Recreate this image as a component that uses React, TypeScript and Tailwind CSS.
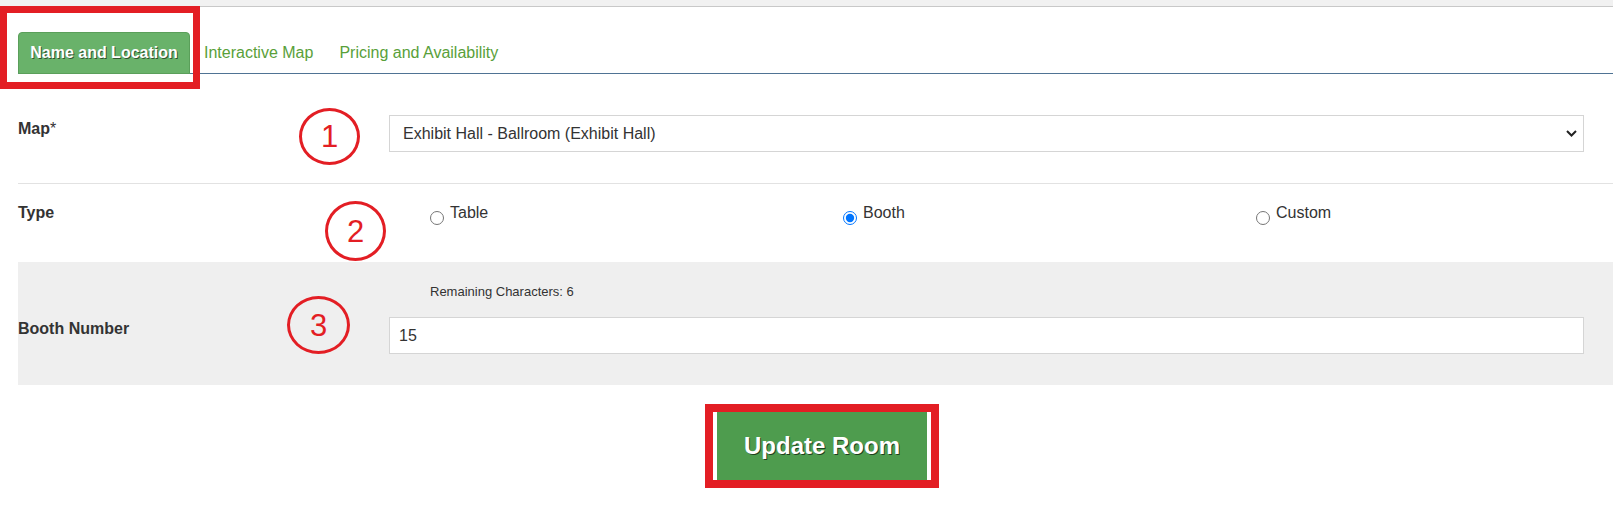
import React from "react";

const tabs = ["Name and Location", "Interactive Map", "Pricing and Availability"];

function Marker({ n, className }: { n: number; className: string }) {
  // red hand-drawn style annotation circle
  return (
    <div
      className={`absolute flex items-center justify-center rounded-[50%] border-[3.5px] border-[#e31e24] text-[#e31e24] text-[31px] leading-none ${className}`}
    >
      {n}
    </div>
  );
}

export default function App() {
  return (
    <div className="relative min-h-[518px] bg-white font-['Liberation_Sans',Arial,sans-serif] text-[#333]">
      <div className="h-[6px] bg-[#f1f1f1] border-b border-[#c8c8c8] box-content" />

      {/* Tabs */}
      <div className="pt-[25px]">
        <div className="ml-[18px] flex items-end border-b border-[#4f7394]">
          {tabs.map((t, i) =>
            i === 0 ? (
              <div
                key={t}
                className="-mb-px h-[42px] w-[172px] flex items-center justify-center rounded-t-[4px] bg-[#69b26a] border border-[#5a9f5a] text-white text-[16px] font-bold [text-shadow:1px_1px_0_rgba(0,0,0,0.55)]"
              >
                {t}
              </div>
            ) : (
              <div key={t} className="ml-[2px] h-[41px] px-[12px] flex items-center text-[16px] text-[#59a03a]">
                {t}
              </div>
            )
          )}
        </div>
      </div>

      {/* Form */}
      <div className="pl-[18px]">
        {/* Map row */}
        <div className="flex h-[110px] border-b border-[#e2e2e2]">
          <div className="w-[371px] shrink-0 pt-[46px] text-[16px] font-bold leading-[18px]">
            Map<span className="font-normal">*</span>
          </div>
          <div className="flex-1 mr-[29px] pt-[41px]">
            <div className="relative">
              <select
                defaultValue="a"
                className="w-full h-[37px] appearance-none border border-[#d5d5d5] bg-white pl-[13px] text-[16px] text-[#333] outline-none"
              >
                <option value="a">Exhibit Hall - Ballroom (Exhibit Hall)</option>
              </select>
              <svg
                className="pointer-events-none absolute right-[7px] top-[15px]"
                width="11"
                height="7"
                viewBox="0 0 11 7"
              >
                <path d="M1 1l4.5 4.5L10 1" fill="none" stroke="#222" strokeWidth="2" />
              </svg>
            </div>
          </div>
        </div>

        {/* Type row */}
        <div className="flex h-[78px]">
          <div className="w-[371px] shrink-0 pt-[20px] text-[16px] font-bold leading-[18px]">Type</div>
          <div className="flex pl-[41px] pt-[20px]">
            {["Table", "Booth", "Custom"].map((o) => (
              <label key={o} className="w-[413px] shrink-0 flex items-start gap-[6px] text-[16px] leading-[18px]">
                <input
                  type="radio"
                  name="type"
                  defaultChecked={o === "Booth"}
                  className="mt-[7px] w-[14px] h-[14px] accent-[#0075ff]"
                />
                {o}
              </label>
            ))}
          </div>
        </div>

        {/* Booth number row */}
        <div className="flex h-[123px] bg-[#efefef]">
          <div className="w-[371px] shrink-0 pt-[58px] text-[16px] font-bold leading-[18px]">Booth Number</div>
          <div className="flex-1 mr-[29px] pt-[22px]">
            <div className="pl-[41px] text-[13px] leading-[16px] mb-[17px]">Remaining Characters: 6</div>
            <input
              defaultValue="15"
              className="w-full h-[37px] border border-[#d5d5d5] bg-white pl-[9px] text-[16px] text-[#333] outline-none"
            />
          </div>
        </div>

        {/* Submit */}
        <div className="mt-[19px] ml-[687px] w-[234px] h-[84px] border-[8px] border-[#e31e24] px-[4px]">
          <button className="w-full h-full bg-[#4e9c4e] text-white text-[24px] font-bold [text-shadow:1px_1px_0_rgba(0,0,0,0.6)]">
            Update Room
          </button>
        </div>
      </div>

      {/* annotations */}
      <div className="absolute left-0 top-[6px] w-[200px] h-[83px] border-[7px] border-[#e31e24]" />
      <Marker n={1} className="left-[299px] top-[108px] w-[61px] h-[57px]" />
      <Marker n={2} className="left-[325px] top-[201px] w-[61px] h-[60px]" />
      <Marker n={3} className="left-[287px] top-[296px] w-[63px] h-[58px]" />
    </div>
  );
}
